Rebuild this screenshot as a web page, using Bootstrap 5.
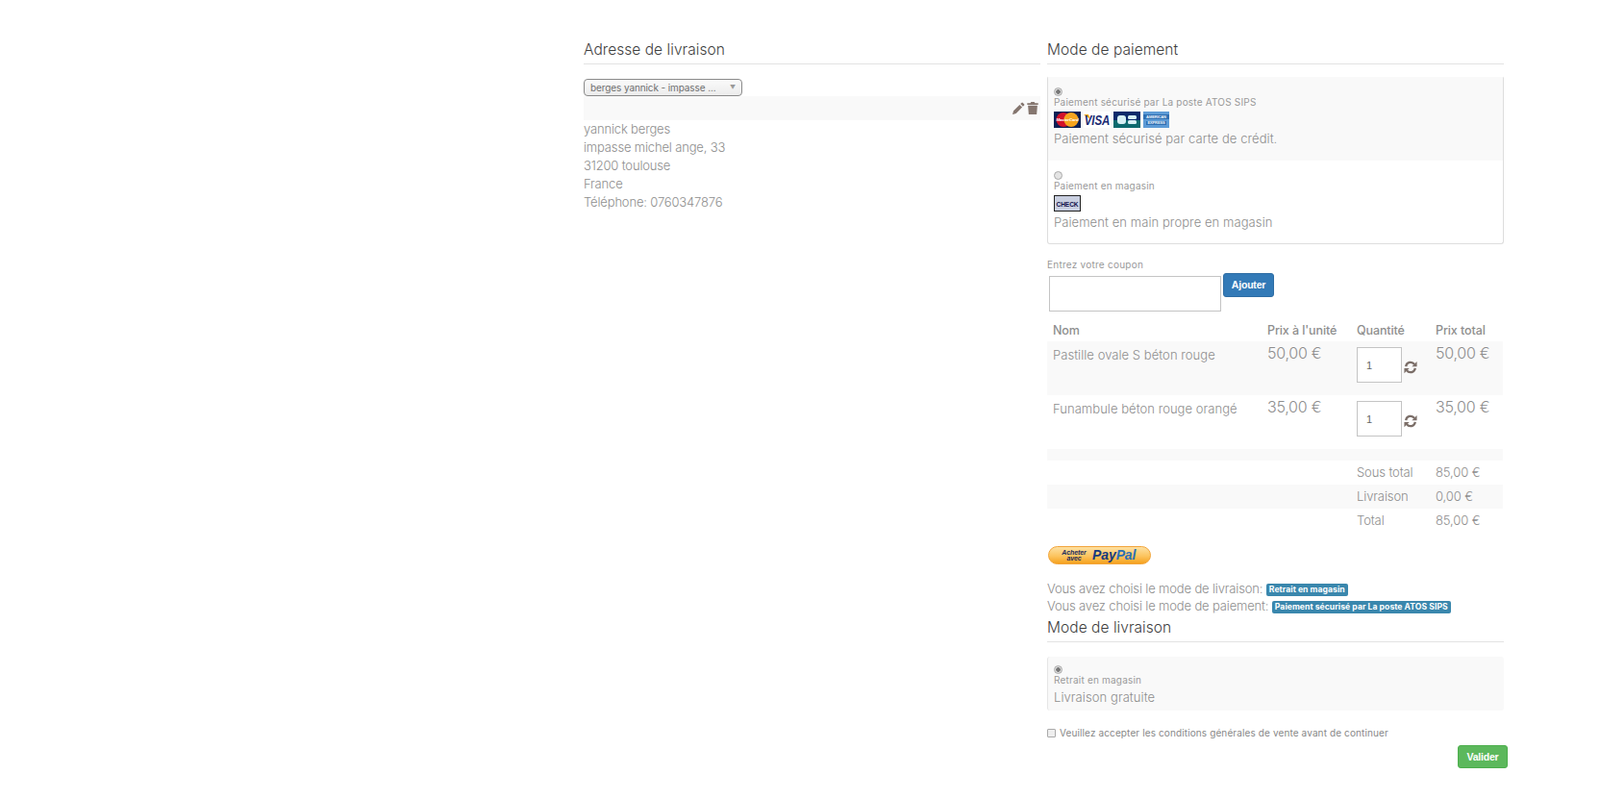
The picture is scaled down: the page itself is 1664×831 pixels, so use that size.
<!DOCTYPE html>
<html lang="fr">
<head>
<meta charset="utf-8">
<title>Commande</title>
<link href="https://cdn.jsdelivr.net/npm/bootstrap@5.3.0/dist/css/bootstrap.min.css" rel="stylesheet">
<style>
body{font-family:Inter,"Noto Sans",sans-serif;font-size:13px;font-weight:300;color:#8e8e8e;background:#fff;line-height:19px;letter-spacing:-.1px}
.page-wrap{padding:41px 0 0 607px;width:1580px;gap:7px}
.col-left{width:475px;flex:none}
.col-right{width:475px;flex:none}
.sec-title{font-size:15.5px;line-height:22px;font-weight:300;color:#3f3f3f;border-bottom:1px solid #e3e3e3;padding-bottom:3px;margin:0 0 15px;letter-spacing:.05px}
.sec-pay{margin-bottom:12px}
.addr-select{width:165px;height:18px;font-size:10px;line-height:16px;padding:0 6px;border:1px solid #8a8a8a;border-radius:4px;background:linear-gradient(#fafafa,#ececec);color:#6f6f6f;letter-spacing:-.1px;font-weight:400}
.addr-arrow{font-size:6px;color:#999}
.addr-tools{height:25px;background:#f9f9f9;gap:2px;padding-right:2px}
.addr-line{height:19px;letter-spacing:-.16px}
.pay-box{border:1px solid #ddd;border-radius:3px;border-top-color:transparent;width:475px}
.pay-opt{padding:11px 6px 0}
.pay-a{height:87px;background:#f9f9f9}
.pay-b{height:86px}
.opt-radio{appearance:none;display:block;width:9px;height:9px;margin:0;border-radius:50%;border:1px solid #aaa;background:#e4e4e4}
.opt-radio:checked{background:radial-gradient(circle,#777 0 2px,#ddd 2.5px)}
.opt-label{font-size:10px;line-height:12px;margin:0 0 4px;color:#999;letter-spacing:.2px;font-weight:400}
.opt-logos{gap:3px;height:17px}
.opt-desc{font-size:13px;line-height:19px;margin-top:2px;color:#8e8e8e;letter-spacing:.08px}
.coupon-label{font-size:10px;line-height:12px;margin-top:15px;color:#999;letter-spacing:.25px;font-weight:400}
.coupon-row{gap:2px;padding-left:2px;margin-top:6px}
.coupon-input{width:179px;height:37px;border:1px solid #c4c4c4;border-radius:0}
.btn-add{width:53px;height:25px;margin-top:-3px;padding:0;font:bold 10.5px/23px "Liberation Sans",sans-serif;background:#337ab7;border:1px solid #2e6da4;border-radius:3px;color:#fff;letter-spacing:-.2px}
.cart{width:474px;table-layout:fixed;margin:7px 0 0;--bs-table-color:#8e8e8e;--bs-table-bg:transparent}
.cart>*>tr>*{border:0;padding:0 7px;box-shadow:none;color:#8e8e8e}
.cart>*>tr>*:first-child{padding-left:6px}
.cart th{font-weight:500;font-size:12.5px;height:24px;vertical-align:middle;letter-spacing:-.1px}
.cart .item-row td{height:56px;vertical-align:top;padding-top:6px}
.cart .item-name{padding-top:5px!important;letter-spacing:.05px}
.cart .item-price{font-size:16px;line-height:14px;padding-top:5px!important;letter-spacing:-.25px}
.qty-wrap{gap:2px}
.qty-input{width:47px;height:37px;border:1px solid #c4c4c4;font:11px "Liberation Sans",sans-serif;padding:0 0 0 9px;color:#666}
.qty-icon{margin-top:14px}
.cart .gap-row td{height:12px;padding:0}
.cart .sum-row td{height:25px;vertical-align:middle}
.cart tr.shade>td{background:#f9f9f9}
.paypal-wrap{margin-top:14px;padding-left:1px;height:19px}
.choice-wrap{margin-top:16px}
.choice-line{height:18px;letter-spacing:-.15px}
.tag-choice{background:#3a87ad;color:#fff;font-size:8.6px;line-height:13px;height:13px;font-weight:700;border-radius:2px;padding:0 3px;letter-spacing:.05px;vertical-align:1px;display:inline-block}
.title-ship{margin-top:3px}
.ship-box{height:56px;background:#f9f9f9;border-left:1px solid #e6e6e6;border-radius:3px;padding:9px 6px 0}
.ship-box .opt-desc{margin-top:2px;line-height:20px}
.accept{margin-top:17px;gap:4px;font-size:10px;line-height:12px;color:#888;letter-spacing:.12px;font-weight:400}
.accept-box{width:9px;height:9px;margin:0;appearance:none;border:1px solid #aaa;background:#eee;border-radius:1px;flex:none}
.valid-row{margin:7px -4px 0 0}
.btn-valid{width:52px;height:24px;padding:0;font:bold 10.5px/22px "Liberation Sans",sans-serif;background:#5cb85c;border:1px solid #4cae4c;border-radius:3px;color:#fff;letter-spacing:-.2px}
svg{display:block;flex:none}
</style>
</head>
<body>
<div class="page-wrap d-flex align-items-start">
  <section class="col-left">
    <h2 class="sec-title">Adresse de livraison</h2>
    <div class="addr-select d-flex justify-content-between align-items-center"><span>berges yannick - impasse ...</span><span class="addr-arrow">▼</span></div>
    <div class="addr-tools d-flex justify-content-end align-items-center">
      <svg width="13" height="13" viewBox="0 0 16 16" fill="#85766f"><path d="M11.6 1.1a1.2 1.2 0 0 1 1.7 0l1.6 1.6a1.2 1.2 0 0 1 0 1.7l-1.5 1.5-3.3-3.3zM9.1 3.6l3.3 3.3-7.8 7.8L.4 15.9a.3.3 0 0 1-.3-.3l1.2-4.2z"/></svg>
      <svg width="12" height="13" viewBox="0 0 14 16" fill="#85766f"><path d="M5 0h4l1 1.6h4v2H0v-2h4zM1 4.6h12L12.1 16H1.9z"/></svg>
    </div>
    <div>
      <div class="addr-line">yannick berges</div>
      <div class="addr-line">impasse michel ange, 33</div>
      <div class="addr-line">31200 toulouse</div>
      <div class="addr-line">France</div>
      <div class="addr-line">Téléphone: 0760347876</div>
    </div>
  </section>
  <section class="col-right">
    <h2 class="sec-title sec-pay">Mode de paiement</h2>
    <div class="pay-box">
      <div class="pay-opt pay-a">
        <input class="opt-radio" type="radio" name="pay" checked aria-label="Paiement sécurisé par La poste ATOS SIPS">
        <div class="opt-label">Paiement sécurisé par La poste ATOS SIPS</div>
        <div class="opt-logos d-flex">
          <svg width="28" height="17" viewBox="0 0 28 17"><rect width="28" height="17" fill="#0b1f55"/><circle cx="10" cy="8.5" r="7.6" fill="#d2112a"/><circle cx="18" cy="8.5" r="7.6" fill="#f5a41e"/><text x="14" y="10.2" text-anchor="middle" font-family="Liberation Sans" font-size="4.4" font-weight="700" font-style="italic" fill="#fff">MasterCard</text></svg>
          <svg width="28" height="17" viewBox="0 0 28 17"><rect width="28" height="17" fill="#fff"/><path d="M0 3h5l2 5z" fill="#f3a51e"/><text transform="translate(14 14) scale(1 1.25)" text-anchor="middle" font-family="Liberation Sans" font-size="11.5" font-weight="700" font-style="italic" fill="#1a2a72">VISA</text></svg>
          <svg width="28" height="17" viewBox="0 0 28 17"><rect width="28" height="17" fill="#0b2a6b"/><rect y="9" width="28" height="8" fill="#0b6a6e"/><rect x="4" y="4" width="9" height="9" rx="3" fill="#d6f0f4"/><rect x="15" y="4" width="9" height="4" rx="1.5" fill="#d6f0f4"/><rect x="15" y="9" width="9" height="4" rx="1.5" fill="#d6f0f4"/></svg>
          <svg width="27" height="17" viewBox="0 0 27 17"><rect width="27" height="17" fill="#5d9bd6"/><rect y="3" width="27" height="5" fill="#2f6fb2"/><rect x="3" y="10" width="21" height="4" fill="#2f6fb2"/><text x="13.5" y="7.2" text-anchor="middle" font-family="Liberation Sans" font-size="4" font-weight="700" fill="#eaf3fb">AMERICAN</text><text x="13.5" y="13.4" text-anchor="middle" font-family="Liberation Sans" font-size="4" font-weight="700" fill="#eaf3fb">EXPRESS</text></svg>
        </div>
        <div class="opt-desc">Paiement sécurisé par carte de crédit.</div>
      </div>
      <div class="pay-opt pay-b">
        <input class="opt-radio" type="radio" name="pay" aria-label="Paiement en magasin">
        <div class="opt-label">Paiement en magasin</div>
        <div class="opt-logos d-flex">
          <svg width="28" height="17" viewBox="0 0 28 17"><rect x=".5" y=".5" width="27" height="16" fill="#c9cfe0" stroke="#222"/><text x="14" y="11.5" text-anchor="middle" font-family="Liberation Sans" font-size="6.6" font-weight="700" fill="#10104a">CHECK</text></svg>
        </div>
        <div class="opt-desc">Paiement en main propre en magasin</div>
      </div>
    </div>
    <div class="coupon-label">Entrez votre coupon</div>
    <div class="coupon-row d-flex align-items-start">
      <input class="coupon-input" type="text" aria-label="Entrez votre coupon">
      <button class="btn btn-primary btn-add" type="button">Ajouter</button>
    </div>
    <table class="table cart">
      <colgroup><col style="width:222px"><col style="width:93px"><col style="width:82px"><col style="width:77px"></colgroup>
      <thead><tr><th>Nom</th><th>Prix à l'unité</th><th>Quantité</th><th>Prix total</th></tr></thead>
      <tbody>
        <tr class="item-row shade">
          <td class="item-name">Pastille ovale S béton rouge</td><td class="item-price">50,00 €</td>
          <td><div class="qty-wrap d-flex"><input class="qty-input" type="text" value="1" aria-label="Quantité"><svg class="qty-icon" width="14" height="14" viewBox="0 0 16 16" fill="none" stroke="#7b6e68" stroke-width="2.6"><path d="M2.5 7A5.6 5.6 0 0 1 12.6 4.4"/><path d="M13.5 9A5.6 5.6 0 0 1 3.4 11.6"/><path d="M15.5 1v6h-6z" fill="#7b6e68" stroke="none"/><path d="M.5 15V9h6z" fill="#7b6e68" stroke="none"/></svg></div></td>
          <td class="item-price">50,00 €</td>
        </tr>
        <tr class="item-row">
          <td class="item-name">Funambule béton rouge orangé</td><td class="item-price">35,00 €</td>
          <td><div class="qty-wrap d-flex"><input class="qty-input" type="text" value="1" aria-label="Quantité"><svg class="qty-icon" width="14" height="14" viewBox="0 0 16 16" fill="none" stroke="#7b6e68" stroke-width="2.6"><path d="M2.5 7A5.6 5.6 0 0 1 12.6 4.4"/><path d="M13.5 9A5.6 5.6 0 0 1 3.4 11.6"/><path d="M15.5 1v6h-6z" fill="#7b6e68" stroke="none"/><path d="M.5 15V9h6z" fill="#7b6e68" stroke="none"/></svg></div></td>
          <td class="item-price">35,00 €</td>
        </tr>
        <tr class="gap-row shade"><td colspan="4"></td></tr>
        <tr class="sum-row"><td colspan="2"></td><td>Sous total</td><td>85,00 €</td></tr>
        <tr class="sum-row shade"><td colspan="2"></td><td>Livraison</td><td>0,00 €</td></tr>
        <tr class="sum-row"><td colspan="2"></td><td>Total</td><td>85,00 €</td></tr>
      </tbody>
    </table>
    <div class="paypal-wrap">
      <svg width="107" height="19" viewBox="0 0 107 19"><defs><linearGradient id="ppg" x1="0" y1="0" x2="0" y2="1"><stop offset="0" stop-color="#fde2a6"/><stop offset=".55" stop-color="#fcc45e"/><stop offset="1" stop-color="#f59f1a"/></linearGradient></defs><rect x=".5" y=".5" width="106" height="18" rx="9" fill="url(#ppg)" stroke="#f2a43a"/><text x="27" y="8.5" text-anchor="middle" font-family="Liberation Sans" font-size="7" font-weight="700" font-style="italic" fill="#222c5c">Acheter</text><text x="27" y="15" text-anchor="middle" font-family="Liberation Sans" font-size="7" font-weight="700" font-style="italic" fill="#222c5c">avec</text><text x="46" y="14" font-family="Liberation Sans" font-size="14" font-weight="700" font-style="italic" fill="#173a7e">Pay<tspan fill="#2b6fb5">Pal</tspan></text></svg>
    </div>
    <div class="choice-wrap">
      <div class="choice-line">Vous avez choisi le mode de livraison: <span class="tag-choice">Retrait en magasin</span></div>
      <div class="choice-line">Vous avez choisi le mode de paiement: <span class="tag-choice">Paiement sécurisé par La poste ATOS SIPS</span></div>
    </div>
    <h2 class="sec-title title-ship">Mode de livraison</h2>
    <div class="ship-box">
      <input class="opt-radio" type="radio" name="ship" checked aria-label="Retrait en magasin">
      <div class="opt-label mb-0">Retrait en magasin</div>
      <div class="opt-desc">Livraison gratuite</div>
    </div>
    <label class="accept d-flex align-items-center"><input class="accept-box" type="checkbox">Veuillez accepter les conditions générales de vente avant de continuer</label>
    <div class="valid-row d-flex justify-content-end"><button class="btn btn-success btn-valid" type="button">Valider</button></div>
  </section>
</div>
<script src="https://cdn.jsdelivr.net/npm/bootstrap@5.3.0/dist/js/bootstrap.bundle.min.js"></script>
</body>
</html>
